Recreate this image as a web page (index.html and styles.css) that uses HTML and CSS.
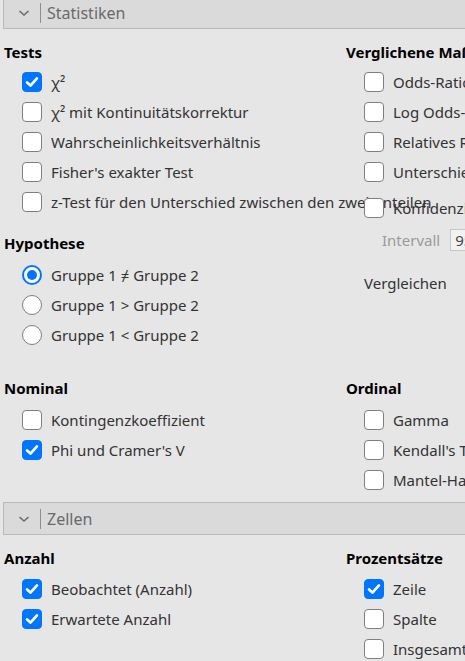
FILE: index.html
```html
<!DOCTYPE html>
<html lang="de">
<head>
<meta charset="utf-8">
<link rel="stylesheet" href="styles.css">
</head>
<body>
<div class="page">
  <div class="panel-header first">
    <svg class="chev" width="12" height="8" viewBox="0 0 12 8"><path d="M1.5 2 L6 6 L10.5 2" fill="none" stroke="#6b6b6b" stroke-width="1.6"/></svg>
    <span class="sep"></span>
    <span class="title">Statistiken</span>
  </div>

  <div class="grid sec-tests">
    <div class="col">
      <div class="heading">Tests</div>
      <div class="items">
        <label class="item"><span class="cb checked"><svg viewBox="0 0 20 20"><path d="M4.5 10.5 L8.3 14 L15.5 6" fill="none" stroke="#fff" stroke-width="3" stroke-linecap="round" stroke-linejoin="round"/></svg></span><span class="lbl">χ²</span></label>
        <label class="item"><span class="cb"></span><span class="lbl">χ² mit Kontinuitätskorrektur</span></label>
        <label class="item"><span class="cb"></span><span class="lbl">Wahrscheinlichkeitsverhältnis</span></label>
        <label class="item"><span class="cb"></span><span class="lbl">Fisher's exakter Test</span></label>
        <label class="item"><span class="cb"></span><span class="lbl">z-Test für den Unterschied zwischen den zwei Anteilen</span></label>
      </div>
      <div class="heading hyp">Hypothese</div>
      <div class="items">
        <label class="item"><span class="rb checked"><span class="dot"></span></span><span class="lbl">Gruppe 1 ≠ Gruppe 2</span></label>
        <label class="item"><span class="rb"></span><span class="lbl">Gruppe 1 &gt; Gruppe 2</span></label>
        <label class="item"><span class="rb"></span><span class="lbl">Gruppe 1 &lt; Gruppe 2</span></label>
      </div>
    </div>
    <div class="col">
      <div class="heading">Verglichene Maße</div>
      <div class="items">
        <label class="item"><span class="cb"></span><span class="lbl">Odds-Ratio</span></label>
        <label class="item"><span class="cb"></span><span class="lbl">Log Odds-Ratio</span></label>
        <label class="item"><span class="cb"></span><span class="lbl">Relatives Risiko</span></label>
        <label class="item"><span class="cb"></span><span class="lbl">Unterschied der Anteile</span></label>
        <label class="item konf"><span class="cb"></span><span class="lbl">Konfidenzintervalle</span></label>
        <div class="interval"><span class="int-lbl">Intervall</span><span class="int-input">95</span><span class="int-unit">%</span></div>
        <div class="compare">Vergleichen</div>
      </div>
    </div>
  </div>

  <div class="grid sec-nom">
    <div class="col">
      <div class="heading">Nominal</div>
      <div class="items">
        <label class="item"><span class="cb"></span><span class="lbl">Kontingenzkoeffizient</span></label>
        <label class="item"><span class="cb checked"><svg viewBox="0 0 20 20"><path d="M4.5 10.5 L8.3 14 L15.5 6" fill="none" stroke="#fff" stroke-width="3" stroke-linecap="round" stroke-linejoin="round"/></svg></span><span class="lbl">Phi und Cramer's V</span></label>
      </div>
    </div>
    <div class="col">
      <div class="heading">Ordinal</div>
      <div class="items">
        <label class="item"><span class="cb"></span><span class="lbl">Gamma</span></label>
        <label class="item"><span class="cb"></span><span class="lbl">Kendall's Tau-b</span></label>
        <label class="item"><span class="cb"></span><span class="lbl">Mantel-Haenszel</span></label>
      </div>
    </div>
  </div>

  <div class="panel-header">
    <svg class="chev" width="12" height="8" viewBox="0 0 12 8"><path d="M1.5 2 L6 6 L10.5 2" fill="none" stroke="#6b6b6b" stroke-width="1.6"/></svg>
    <span class="sep"></span>
    <span class="title">Zellen</span>
  </div>

  <div class="grid sec-cells">
    <div class="col">
      <div class="heading">Anzahl</div>
      <div class="items">
        <label class="item"><span class="cb checked"><svg viewBox="0 0 20 20"><path d="M4.5 10.5 L8.3 14 L15.5 6" fill="none" stroke="#fff" stroke-width="3" stroke-linecap="round" stroke-linejoin="round"/></svg></span><span class="lbl">Beobachtet (Anzahl)</span></label>
        <label class="item"><span class="cb checked"><svg viewBox="0 0 20 20"><path d="M4.5 10.5 L8.3 14 L15.5 6" fill="none" stroke="#fff" stroke-width="3" stroke-linecap="round" stroke-linejoin="round"/></svg></span><span class="lbl">Erwartete Anzahl</span></label>
      </div>
    </div>
    <div class="col">
      <div class="heading">Prozentsätze</div>
      <div class="items">
        <label class="item"><span class="cb checked"><svg viewBox="0 0 20 20"><path d="M4.5 10.5 L8.3 14 L15.5 6" fill="none" stroke="#fff" stroke-width="3" stroke-linecap="round" stroke-linejoin="round"/></svg></span><span class="lbl">Zeile</span></label>
        <label class="item"><span class="cb"></span><span class="lbl">Spalte</span></label>
        <label class="item"><span class="cb"></span><span class="lbl">Insgesamt</span></label>
      </div>
    </div>
  </div>
</div>
</body>
</html>
```

FILE: styles.css
```css
html, body {
  margin: 0;
  padding: 0;
  background: #e6e6e6;
  overflow: hidden;
}
body {
  width: 465px;
  height: 661px;
  font-family: "Noto Sans", "Open Sans", sans-serif;
  font-size: 15px;
  color: #333;
}
.page {
  width: 465px;
  overflow: hidden;
}
.panel-header {
  display: flex;
  align-items: center;
  height: 31px;
  margin-left: 3px;
  width: 600px;
  background: #dadada;
  border: 1px solid #b9b9b9;
  box-sizing: content-box;
}
.panel-header.first {
  margin-top: -4px;
}
.chev {
  margin-left: 14px;
  margin-right: 10px;
  flex: none;
}
.sep {
  width: 1px;
  height: 20px;
  background: #8d8d8d;
  margin-right: 6px;
}
.title {
  font-size: 16px;
  color: #6a6a6a;
  line-height: 20px;
}
.grid {
  display: grid;
  grid-template-columns: 342px 1fr;
  padding-left: 4px;
}
.col {
  display: flex;
  flex-direction: column;
  min-width: 0;
}
.heading {
  font-weight: 700;
  color: #000;
  line-height: 20px;
  height: 20px;
  margin-bottom: 5px;
  white-space: nowrap;
}
.items {
  display: flex;
  flex-direction: column;
  padding-left: 18px;
}
.item {
  display: flex;
  align-items: center;
  height: 30px;
  white-space: nowrap;
}
.lbl {
  margin-left: 9px;
  line-height: 20px;
}
.cb {
  flex: none;
  width: 18px;
  height: 18px;
  border: 1px solid #7f7f7f;
  border-radius: 4px;
  background: #fff;
  display: flex;
}
.cb.checked {
  background: #0075ff;
  border-color: #0075ff;
}
.cb svg {
  width: 18px;
  height: 18px;
}
.rb {
  flex: none;
  width: 18px;
  height: 18px;
  border: 1px solid #7f7f7f;
  border-radius: 50%;
  background: #fff;
  display: flex;
  align-items: center;
  justify-content: center;
}
.rb.checked {
  border: 2px solid #0075ff;
  width: 16px;
  height: 16px;
}
.rb .dot {
  width: 10px;
  height: 10px;
  border-radius: 50%;
  background: #0075ff;
}
.sec-tests {
  padding-top: 13px;
}
.hyp {
  margin-top: 16px;
  margin-bottom: 7px;
}
.konf {
  margin-top: 6px;
}
.interval {
  display: flex;
  align-items: center;
  height: 24px;
  margin-top: 5px;
  padding-left: 18px;
  white-space: nowrap;
}
.int-lbl {
  color: #9a9a9a;
}
.int-input {
  margin-left: 10px;
  height: 20px;
  line-height: 20px;
  padding: 0 4px;
  width: 40px;
  background: #f2f2f2;
  border: 1px solid #c8c8c8;
  color: #444;
}
.int-unit {
  margin-left: 4px;
}
.compare {
  margin-top: 21px;
  line-height: 20px;
}
.sec-nom {
  margin-top: 28px;
  padding-bottom: 7px;
}
.sec-nom .heading {
  margin-bottom: 7px;
}
.sec-cells {
  padding-top: 13px;
}
.sec-cells .heading {
  margin-bottom: 6px;
}
```
